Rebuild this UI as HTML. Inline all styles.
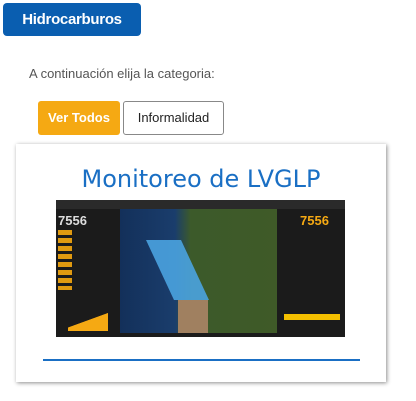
<!DOCTYPE html>
<html><head><style>
body{margin:0;width:416px;height:401px;background:#fff;font-family:"Liberation Sans",sans-serif;position:relative;overflow:hidden}
.a{position:absolute}
</style></head><body>
<div class="a" style="left:3px;top:3px;width:138px;height:33px;background:#0a5eb0;border-radius:4px;color:#fff;font-size:15px;line-height:33px;text-align:center;font-weight:bold;letter-spacing:-0.3px">Hidrocarburos</div>
<div class="a" style="left:29px;top:66px;font-size:13px;color:#555">A continuación elija la categoria:</div>
<div class="a" style="left:38px;top:101px;width:82px;height:34px;background:#f5a913;border-radius:3px;color:#fff;font-size:13px;line-height:34px;text-align:center;font-weight:bold">Ver Todos</div>
<div class="a" style="left:123px;top:101px;width:99px;height:32px;border:1px solid #888;border-radius:3px;color:#222;font-size:13px;line-height:32px;text-align:center">Informalidad</div>
<div class="a" style="left:16px;top:144px;width:370px;height:238px;background:#fff;box-shadow:1px 1px 4px rgba(0,0,0,.45)"></div>
<div class="a" style="left:16px;top:165px;width:370px;text-align:center;font-family:'DejaVu Sans',sans-serif;font-size:24px;color:#1a6fc4">Monitoreo de LVGLP</div>
<div class="a" style="left:56px;top:200px;width:289px;height:137px;background:#1b1b1b"></div>
<div class="a" style="left:56px;top:200px;width:289px;height:9px;background:#2a2a2a"></div>
<div class="a" style="left:120px;top:209px;width:157px;height:124px;background:linear-gradient(90deg,#13305a 0%,#1a3d6c 35%,#3c5a2a 45%,#3f5a28 100%)"></div>
<div class="a" style="left:160px;top:240px;width:35px;height:60px;background:#4aa3e0;transform:skewX(25deg);opacity:.9"></div>
<div class="a" style="left:178px;top:300px;width:30px;height:33px;background:#a08060"></div>
<div class="a" style="left:58px;top:213px;font-size:13px;color:#ddd;font-weight:bold">7556</div>
<div class="a" style="left:300px;top:213px;font-size:13px;color:#f5a913;font-weight:bold">7556</div>
<div class="a" style="left:58px;top:230px;width:14px;height:60px;background:repeating-linear-gradient(#e09a10 0 5px,#1b1b1b 5px 8px)"></div>
<div class="a" style="left:68px;top:305px;width:40px;height:26px;background:linear-gradient(160deg,transparent 55%,#f5a913 56%)"></div>
<div class="a" style="left:284px;top:314px;width:56px;height:6px;background:#f5c000"></div>
<div class="a" style="left:43px;top:359px;width:317px;height:2px;background:#1a6fc4"></div>
</body></html>
